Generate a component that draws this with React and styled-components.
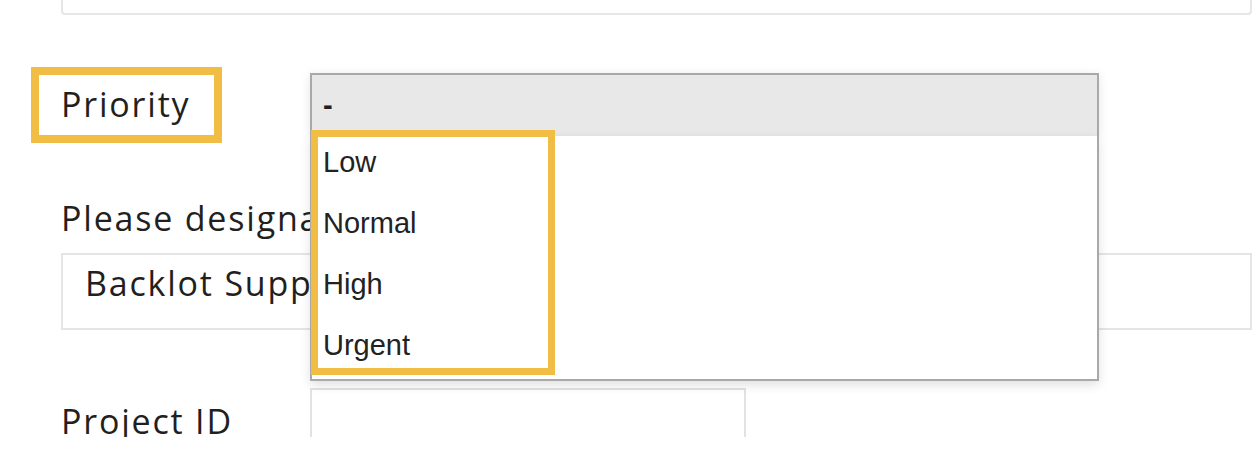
import styled, { createGlobalStyle } from 'styled-components';

const GlobalStyle = createGlobalStyle`
  html, body {
    margin: 0;
    background: #ffffff;
  }
  * {
    box-sizing: border-box;
  }
`;

const mark = '#f2bd44';

const Page = styled.div`
  width: 1259px;
  height: 437px;
  overflow: hidden;
  background: #ffffff;
  font-family: "Open Sans", "Liberation Sans", sans-serif;
  color: #231f20;
`;

const Form = styled.form`
  display: flex;
  flex-direction: column;
  padding: 0 7px 0 61px;
`;

const TopField = styled.div`
  height: 15px;
  border: 2px solid #e6e6e6;
  border-top: none;
  border-radius: 0 0 4px 4px;
`;

const Row = styled.div`
  display: grid;
  grid-template-columns: 249px 1fr;
  align-items: start;
  margin-top: ${p => p.$top}px;
`;

const Label = styled.label`
  display: block;
  font-size: 34px;
  line-height: 41px;
  letter-spacing: 1.8px;
  white-space: nowrap;
  margin-top: ${p => p.$top || 0}px;
`;

const MarkedLabel = styled(Label)`
  justify-self: start;
  width: 191px;
  height: 76px;
  margin-left: -30px;
  padding: 9px 0 0 22px;
  border: 8px solid ${mark};
`;

const SelectWrap = styled.div`
  position: relative;
  width: 789px;
  margin-top: 6px;
  font-family: "Liberation Sans", Arial, sans-serif;
  font-size: 29px;
`;

const SelectHeader = styled.div`
  height: 63px;
  display: flex;
  align-items: center;
  padding-left: 11px;
  background: #e8e8e8;
  border: 2px solid #a9a9a9;
  border-bottom: none;
  font-weight: bold;
  box-shadow: 0 2px 10px rgba(0, 0, 0, 0.1);
`;

const OptionList = styled.ul`
  position: absolute;
  top: 100%;
  left: 0;
  right: 0;
  z-index: 2;
  margin: 0;
  padding: 0 0 4px;
  list-style: none;
  background: #ffffff;
  border: 2px solid #a9a9a9;
  border-top: none;
  box-shadow: 0 4px 10px rgba(0, 0, 0, 0.12);
`;

const OptionsMark = styled.div`
  width: 244px;
  margin: -6px 0 0 -1px;
  padding: 9px 5px 6px;
  border: 7px solid ${mark};
  display: flex;
  flex-direction: column;
  gap: 28px;
`;

const Option = styled.li`
  line-height: 33px;
  color: #222;
`;

const TextField = styled.div`
  height: 77px;
  margin-top: 14px;
  padding: 8px 0 0 22px;
  border: 2px solid #e5e5e5;
  font-size: 34px;
  line-height: 41px;
  letter-spacing: 1.8px;
  white-space: nowrap;
`;

const SmallInput = styled.div`
  width: 436px;
  height: 80px;
  border: 2px solid #e2e2e2;
`;

const options = ['Low', 'Normal', 'High', 'Urgent'];

const App = () => {
  return (
    <>
      <GlobalStyle />
      <Page>
        <Form>
          <TopField />
          <Row $top={52}>
            <MarkedLabel>Priority</MarkedLabel>
            <SelectWrap>
              <SelectHeader>-</SelectHeader>
              <OptionList>
                <OptionsMark>
                  {options.map(o => (
                    <Option key={o}>{o}</Option>
                  ))}
                </OptionsMark>
              </OptionList>
            </SelectWrap>
          </Row>
          <Label $top={55}>Please designate a support team</Label>
          <TextField>Backlot Support</TextField>
          <Row $top={58}>
            <Label $top={13}>Project ID</Label>
            <SmallInput />
          </Row>
        </Form>
      </Page>
    </>
  );
};

export default App;
